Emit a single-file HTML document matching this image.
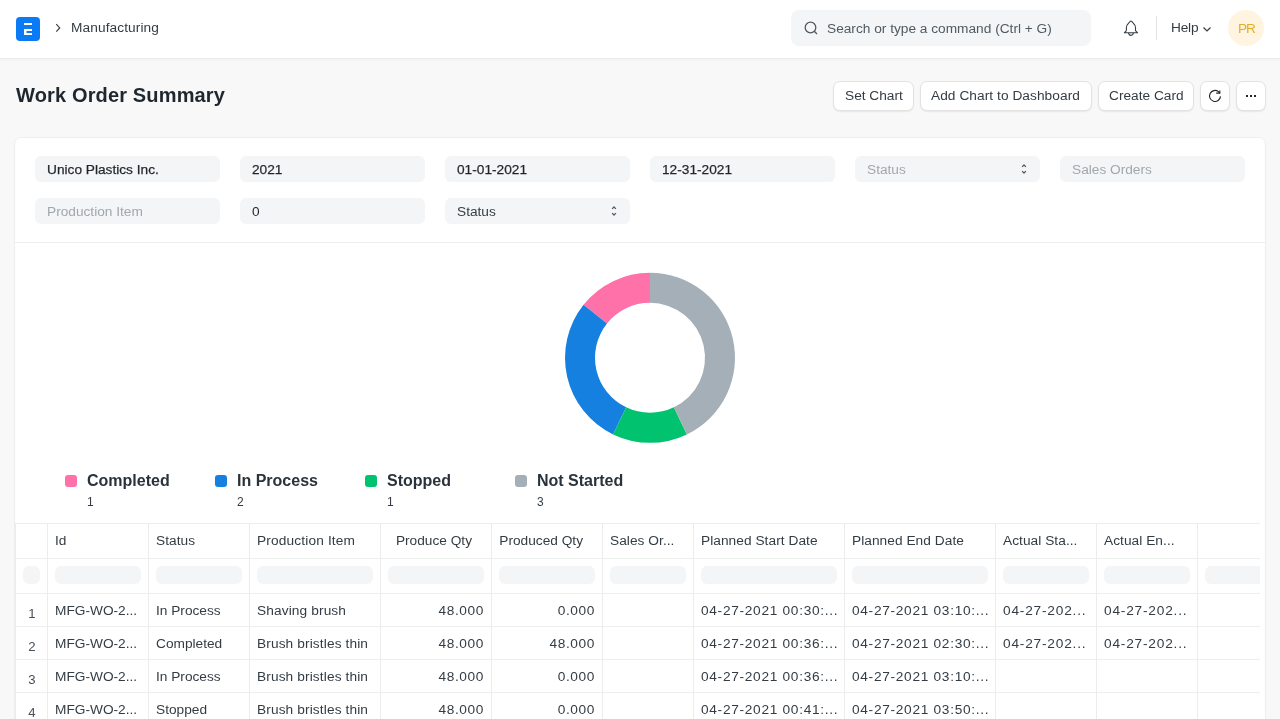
<!DOCTYPE html><html><head><meta charset="utf-8"><style>
*{box-sizing:border-box;margin:0;padding:0}
html,body{width:1280px;height:719px;overflow:hidden}
body{-webkit-font-smoothing:antialiased;background:#F8F8F8;font-family:"Liberation Sans",sans-serif;color:#333C44;position:relative;font-size:13px}
.a{position:absolute;white-space:nowrap}
.t{position:absolute;white-space:nowrap;font-size:13.7px;line-height:16px;letter-spacing:0;will-change:transform}
.a{will-change:transform}
.nav{position:absolute;left:0;top:0;width:1280px;height:59px;background:#fff;border-bottom:1px solid #E8E9E9;box-shadow:0 1px 3px rgba(0,0,0,0.035)}
.btn{position:absolute;top:81px;height:30px;background:#fff;border:1px solid #E3E3E3;border-radius:7px;box-shadow:0 1px 1.5px rgba(0,0,0,0.07)}
.card{position:absolute;left:14px;top:137px;width:1252px;height:700px;background:#fff;border:1px solid #EEEEEE;border-radius:7px}
.inp{position:absolute;width:185px;height:26px;background:#F4F5F6;border-radius:6px}
.hl{position:absolute;height:1px;background:#EDEEEE}
.vl{position:absolute;width:1px;background:#EBECED}
.fi{position:absolute;height:18px;background:#F4F5F6;border-radius:6px}
</style></head><body>
<div class="nav"></div>
  <svg class="a" style="left:16px;top:17px" width="24" height="24" viewBox="0 0 24 24">
    <rect width="24" height="24" rx="4" fill="#0B7BF5"/>
    <rect x="8" y="6" width="8" height="2" fill="#fff"/>
    <rect x="8" y="12" width="8" height="2" fill="#fff"/>
    <rect x="8" y="12" width="2.5" height="6" fill="#fff"/>
    <rect x="8" y="16" width="8" height="2" fill="#fff"/>
  </svg>
  <svg class="a" style="left:53px;top:21px" width="10" height="14" viewBox="0 0 10 14">
    <path d="M3.3 3.2 L6.7 6.9 L3.3 10.6" fill="none" stroke="#333C44" stroke-width="1.15"/>
  </svg>
  <div class="t" style="left:71px;top:20px;color:#333C44;letter-spacing:0.1px">Manufacturing</div>
  <div class="a" style="left:791px;top:10px;width:300px;height:36px;background:#F4F5F6;border-radius:8px"></div>
  <svg class="a" style="left:802px;top:19px" width="18" height="18" viewBox="0 0 18 18">
    <circle cx="8.5" cy="8.5" r="5.3" fill="none" stroke="#505A62" stroke-width="1.3"/>
    <path d="M12.3 12.3 L15 15" stroke="#505A62" stroke-width="1.3"/>
  </svg>
  <div class="t" style="left:827px;top:21px;color:#505A62">Search or type a command (Ctrl + G)</div>
  <svg class="a" style="left:1121px;top:17px" width="20" height="20" viewBox="0 0 20 20">
    <path d="M5.4 13.6 V10.6 C5.4 8.6 6.1 7.6 7.6 6.1 L9.2 4.4 C9.6 3.9 10.3 3.9 10.7 4.4 L12.3 6.1 C13.8 7.6 14.5 8.6 14.5 10.6 V13.6 L16.6 15.8 H3.3 L5.4 13.6 M7.6 15.8 C7.6 19.2 12.4 19.2 12.4 15.8" fill="none" stroke="#333C44" stroke-width="1.1" stroke-linejoin="round"/>
  </svg>
  <div class="a" style="left:1156px;top:16px;width:1px;height:24px;background:#E2E3E4"></div>
  <div class="t" style="left:1171px;top:20px;color:#333C44;letter-spacing:-0.2px">Help</div>
  <svg class="a" style="left:1201px;top:24px" width="12" height="10" viewBox="0 0 12 10">
    <path d="M2.5 3.5 L6 7 L9.5 3.5" fill="none" stroke="#333C44" stroke-width="1.2"/>
  </svg>
  <div class="a" style="left:1228px;top:10px;width:36px;height:36px;border-radius:50%;background:#FFF4DF"></div>
  <div class="t" style="left:1228px;top:21px;width:36px;text-align:center;color:#E5AD2D;letter-spacing:-1px;text-indent:1px">PR</div>

<div class="a" style="left:16px;top:84px;font-size:20px;line-height:22px;font-weight:700;color:#1F272E;letter-spacing:0.15px">Work Order Summary</div>
<div class="btn" style="left:833px;width:81px"></div>
<div class="t" style="left:845px;top:88px;color:#333C44;letter-spacing:0px">Set Chart</div>
<div class="btn" style="left:920px;width:172px"></div>
<div class="t" style="left:931px;top:88px;color:#333C44;letter-spacing:0.06px">Add Chart to Dashboard</div>
<div class="btn" style="left:1098px;width:96px"></div>
<div class="t" style="left:1109px;top:88px;color:#333C44;letter-spacing:0px">Create Card</div>
<div class="btn" style="left:1200px;width:30px"></div>
<svg class="a" style="left:1207px;top:88px" width="16" height="16" viewBox="0 0 16 16">
  <path d="M13.5 8.4 A5.5 5.5 0 1 1 11.4 3.6 L12.8 5.1" fill="none" stroke="#1F272E" stroke-width="1.15"/>
  <path d="M12.8 2.4 V5.1 H9.2" fill="none" stroke="#1F272E" stroke-width="1.15"/>
</svg>
<div class="btn" style="left:1236px;width:30px"></div>
<div class="a" style="left:1246px;top:95px;width:2.3px;height:2.3px;background:#1F272E"></div>
<div class="a" style="left:1250px;top:95px;width:2.3px;height:2.3px;background:#1F272E"></div>
<div class="a" style="left:1254px;top:95px;width:2.3px;height:2.3px;background:#1F272E"></div>
<div class="card"></div>
<div class="inp" style="left:35px;top:156px"></div>
<div class="t" style="left:47px;top:162px;color:#1F272E;-webkit-text-stroke:0.25px #1F272E;">Unico Plastics Inc.</div>
<div class="inp" style="left:240px;top:156px"></div>
<div class="t" style="left:252px;top:162px;color:#1F272E;-webkit-text-stroke:0.25px #1F272E;">2021</div>
<div class="inp" style="left:445px;top:156px"></div>
<div class="t" style="left:457px;top:162px;color:#1F272E;-webkit-text-stroke:0.25px #1F272E;">01-01-2021</div>
<div class="inp" style="left:650px;top:156px"></div>
<div class="t" style="left:662px;top:162px;color:#1F272E;-webkit-text-stroke:0.25px #1F272E;">12-31-2021</div>
<div class="inp" style="left:855px;top:156px"></div>
<div class="t" style="left:867px;top:162px;color:#A0A8AF;">Status</div>
<svg class="a" style="left:1019px;top:162px" width="10" height="14" viewBox="0 0 10 14">
<path d="M3.1 4.9 L5 3 L6.9 4.9 M3.1 9.1 L5 11 L6.9 9.1" fill="none" stroke="#505A62" stroke-width="1.25"/></svg>
<div class="inp" style="left:1060px;top:156px"></div>
<div class="t" style="left:1072px;top:162px;color:#A0A8AF;">Sales Orders</div>
<div class="inp" style="left:35px;top:198px"></div>
<div class="t" style="left:47px;top:204px;color:#A0A8AF;">Production Item</div>
<div class="inp" style="left:240px;top:198px"></div>
<div class="t" style="left:252px;top:204px;color:#1F272E;">0</div>
<div class="inp" style="left:445px;top:198px"></div>
<div class="t" style="left:457px;top:204px;color:#333C44;">Status</div>
<svg class="a" style="left:609px;top:204px" width="10" height="14" viewBox="0 0 10 14">
<path d="M3.1 4.9 L5 3 L6.9 4.9 M3.1 9.1 L5 11 L6.9 9.1" fill="none" stroke="#505A62" stroke-width="1.25"/></svg>
<div class="hl" style="left:15px;top:242px;width:1250px"></div>
<svg class="a" style="left:0;top:0" width="1280" height="719"><path d="M650.00 272.80 A85 85 0 0 0 583.54 304.80 L607.00 323.51 A55 55 0 0 1 650.00 302.80 Z" fill="#FF72A9"/><path d="M583.54 304.80 A85 85 0 0 0 613.12 434.38 L626.14 407.35 A55 55 0 0 1 607.00 323.51 Z" fill="#1580DF"/><path d="M613.12 434.38 A85 85 0 0 0 686.88 434.38 L673.86 407.35 A55 55 0 0 1 626.14 407.35 Z" fill="#00C26F"/><path d="M686.88 434.38 A85 85 0 0 0 650.00 272.80 L650.00 302.80 A55 55 0 0 1 673.86 407.35 Z" fill="#A5AFB7"/></svg>
<div class="a" style="left:65px;top:475px;width:12px;height:12px;border-radius:3px;background:#FF72A9"></div>
<div class="a" style="left:87px;top:472px;font-size:16px;line-height:18px;font-weight:700;color:#2A333B">Completed</div>
<div class="a" style="left:87px;top:496px;font-size:12px;line-height:13px;color:#333C44">1</div>
<div class="a" style="left:215px;top:475px;width:12px;height:12px;border-radius:3px;background:#1580DF"></div>
<div class="a" style="left:237px;top:472px;font-size:16px;line-height:18px;font-weight:700;color:#2A333B">In Process</div>
<div class="a" style="left:237px;top:496px;font-size:12px;line-height:13px;color:#333C44">2</div>
<div class="a" style="left:365px;top:475px;width:12px;height:12px;border-radius:3px;background:#00C26F"></div>
<div class="a" style="left:387px;top:472px;font-size:16px;line-height:18px;font-weight:700;color:#2A333B">Stopped</div>
<div class="a" style="left:387px;top:496px;font-size:12px;line-height:13px;color:#333C44">1</div>
<div class="a" style="left:515px;top:475px;width:12px;height:12px;border-radius:3px;background:#A5AFB7"></div>
<div class="a" style="left:537px;top:472px;font-size:16px;line-height:18px;font-weight:700;color:#2A333B">Not Started</div>
<div class="a" style="left:537px;top:496px;font-size:12px;line-height:13px;color:#333C44">3</div>
<div class="a" style="left:15px;top:523px;width:1245px;height:196px;overflow:hidden">
<div class="hl" style="left:0px;top:0px;width:1300px"></div>
<div class="hl" style="left:0px;top:35px;width:1300px"></div>
<div class="hl" style="left:0px;top:70px;width:1300px"></div>
<div class="hl" style="left:0px;top:103px;width:1300px"></div>
<div class="hl" style="left:0px;top:136px;width:1300px"></div>
<div class="hl" style="left:0px;top:169px;width:1300px"></div>
<div class="hl" style="left:0px;top:202px;width:1300px"></div>
<div class="vl" style="left:0px;top:0px;height:200px"></div>
<div class="vl" style="left:32px;top:0px;height:200px"></div>
<div class="vl" style="left:133px;top:0px;height:200px"></div>
<div class="vl" style="left:234px;top:0px;height:200px"></div>
<div class="vl" style="left:365px;top:0px;height:200px"></div>
<div class="vl" style="left:476px;top:0px;height:200px"></div>
<div class="vl" style="left:587px;top:0px;height:200px"></div>
<div class="vl" style="left:678px;top:0px;height:200px"></div>
<div class="vl" style="left:829px;top:0px;height:200px"></div>
<div class="vl" style="left:980px;top:0px;height:200px"></div>
<div class="vl" style="left:1081px;top:0px;height:200px"></div>
<div class="vl" style="left:1182px;top:0px;height:200px"></div>
<div class="vl" style="left:1283px;top:0px;height:200px"></div>
<div class="t" style="left:40px;top:10px;color:#333C44;letter-spacing:0.05px">Id</div>
<div class="t" style="left:141px;top:10px;color:#333C44;letter-spacing:0.05px">Status</div>
<div class="t" style="left:242px;top:10px;color:#333C44;letter-spacing:0.15px">Production Item</div>
<div class="t" style="left:365px;top:10px;width:92px;text-align:right;color:#333C44">Produce Qty</div>
<div class="t" style="left:476px;top:10px;width:92px;text-align:right;color:#333C44">Produced Qty</div>
<div class="t" style="left:595px;top:10px;color:#333C44;letter-spacing:0.05px">Sales Or...</div>
<div class="t" style="left:686px;top:10px;color:#333C44;letter-spacing:0.05px">Planned Start Date</div>
<div class="t" style="left:837px;top:10px;color:#333C44;letter-spacing:0.05px">Planned End Date</div>
<div class="t" style="left:988px;top:10px;color:#333C44;letter-spacing:0.05px">Actual Sta...</div>
<div class="t" style="left:1089px;top:10px;color:#333C44;letter-spacing:0.05px">Actual En...</div>
<div class="fi" style="left:8px;top:43px;width:17px"></div>
<div class="fi" style="left:40px;top:43px;width:86px"></div>
<div class="fi" style="left:141px;top:43px;width:86px"></div>
<div class="fi" style="left:242px;top:43px;width:116px"></div>
<div class="fi" style="left:373px;top:43px;width:96px"></div>
<div class="fi" style="left:484px;top:43px;width:96px"></div>
<div class="fi" style="left:595px;top:43px;width:76px"></div>
<div class="fi" style="left:686px;top:43px;width:136px"></div>
<div class="fi" style="left:837px;top:43px;width:136px"></div>
<div class="fi" style="left:988px;top:43px;width:86px"></div>
<div class="fi" style="left:1089px;top:43px;width:86px"></div>
<div class="fi" style="left:1190px;top:43px;width:86px"></div>
<div class="t" style="left:1px;top:83px;width:32px;text-align:center;color:#48515A;font-size:13.2px">1</div>
<div class="t" style="left:40px;top:80px;color:#333C44;letter-spacing:0px">MFG-WO-2...</div>
<div class="t" style="left:141px;top:80px;color:#333C44;letter-spacing:0px">In Process</div>
<div class="t" style="left:242px;top:80px;color:#333C44;letter-spacing:0.12px">Shaving brush</div>
<div class="t" style="left:365px;top:80px;width:104px;text-align:right;color:#333C44;letter-spacing:0.6px">48.000</div>
<div class="t" style="left:476px;top:80px;width:104px;text-align:right;color:#333C44;letter-spacing:0.6px">0.000</div>
<div class="t" style="left:686px;top:80px;color:#333C44;letter-spacing:0.7px">04-27-2021 00:30:...</div>
<div class="t" style="left:837px;top:80px;color:#333C44;letter-spacing:0.7px">04-27-2021 03:10:...</div>
<div class="t" style="left:988px;top:80px;color:#333C44;letter-spacing:0.8px">04-27-202...</div>
<div class="t" style="left:1089px;top:80px;color:#333C44;letter-spacing:0.8px">04-27-202...</div>
<div class="t" style="left:1px;top:116px;width:32px;text-align:center;color:#48515A;font-size:13.2px">2</div>
<div class="t" style="left:40px;top:113px;color:#333C44;letter-spacing:0px">MFG-WO-2...</div>
<div class="t" style="left:141px;top:113px;color:#333C44;letter-spacing:0px">Completed</div>
<div class="t" style="left:242px;top:113px;color:#333C44;letter-spacing:0.12px">Brush bristles thin</div>
<div class="t" style="left:365px;top:113px;width:104px;text-align:right;color:#333C44;letter-spacing:0.6px">48.000</div>
<div class="t" style="left:476px;top:113px;width:104px;text-align:right;color:#333C44;letter-spacing:0.6px">48.000</div>
<div class="t" style="left:686px;top:113px;color:#333C44;letter-spacing:0.7px">04-27-2021 00:36:...</div>
<div class="t" style="left:837px;top:113px;color:#333C44;letter-spacing:0.7px">04-27-2021 02:30:...</div>
<div class="t" style="left:988px;top:113px;color:#333C44;letter-spacing:0.8px">04-27-202...</div>
<div class="t" style="left:1089px;top:113px;color:#333C44;letter-spacing:0.8px">04-27-202...</div>
<div class="t" style="left:1px;top:149px;width:32px;text-align:center;color:#48515A;font-size:13.2px">3</div>
<div class="t" style="left:40px;top:146px;color:#333C44;letter-spacing:0px">MFG-WO-2...</div>
<div class="t" style="left:141px;top:146px;color:#333C44;letter-spacing:0px">In Process</div>
<div class="t" style="left:242px;top:146px;color:#333C44;letter-spacing:0.12px">Brush bristles thin</div>
<div class="t" style="left:365px;top:146px;width:104px;text-align:right;color:#333C44;letter-spacing:0.6px">48.000</div>
<div class="t" style="left:476px;top:146px;width:104px;text-align:right;color:#333C44;letter-spacing:0.6px">0.000</div>
<div class="t" style="left:686px;top:146px;color:#333C44;letter-spacing:0.7px">04-27-2021 00:36:...</div>
<div class="t" style="left:837px;top:146px;color:#333C44;letter-spacing:0.7px">04-27-2021 03:10:...</div>
<div class="t" style="left:1px;top:182px;width:32px;text-align:center;color:#48515A;font-size:13.2px">4</div>
<div class="t" style="left:40px;top:179px;color:#333C44;letter-spacing:0px">MFG-WO-2...</div>
<div class="t" style="left:141px;top:179px;color:#333C44;letter-spacing:0px">Stopped</div>
<div class="t" style="left:242px;top:179px;color:#333C44;letter-spacing:0.12px">Brush bristles thin</div>
<div class="t" style="left:365px;top:179px;width:104px;text-align:right;color:#333C44;letter-spacing:0.6px">48.000</div>
<div class="t" style="left:476px;top:179px;width:104px;text-align:right;color:#333C44;letter-spacing:0.6px">0.000</div>
<div class="t" style="left:686px;top:179px;color:#333C44;letter-spacing:0.7px">04-27-2021 00:41:...</div>
<div class="t" style="left:837px;top:179px;color:#333C44;letter-spacing:0.7px">04-27-2021 03:50:...</div>
</div>
</body></html>
